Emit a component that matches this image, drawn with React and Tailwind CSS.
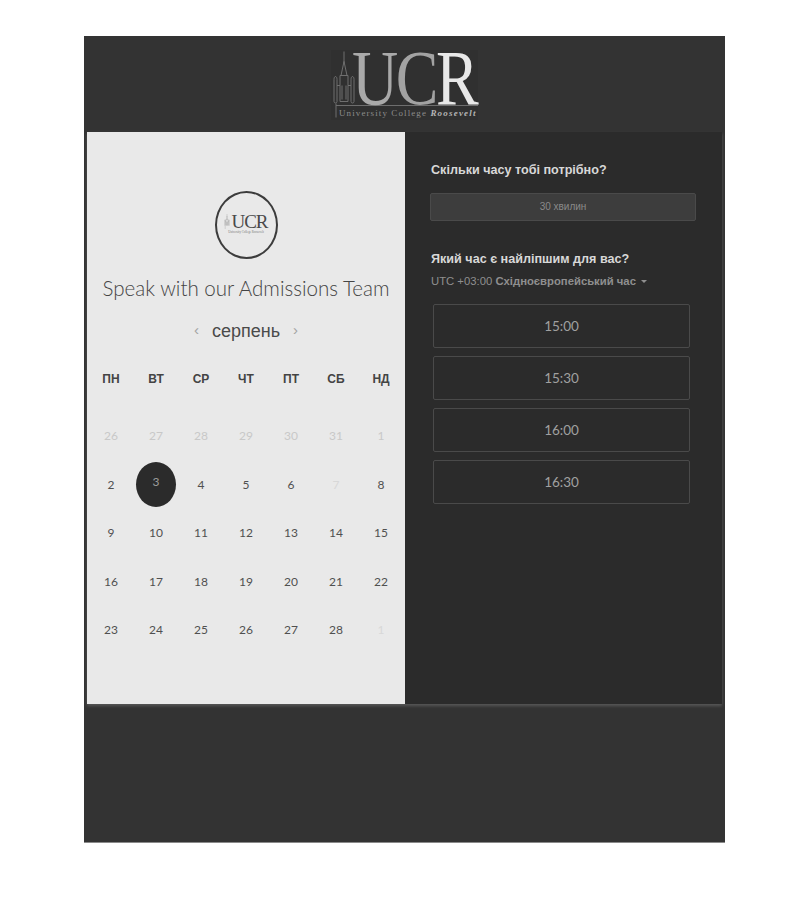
const SANS = "font-['Liberation_Sans',Arial,sans-serif]";
const LATO = "font-['Lato',sans-serif]";
const SERIF = "font-['Liberation_Serif',serif]";

const weeks = [
  [["26", "m"], ["27", "m"], ["28", "m"], ["29", "m"], ["30", "m"], ["31", "m"], ["1", "m"]],
  [["2"], ["3", "s"], ["4"], ["5"], ["6"], ["7", "f"], ["8"]],
  [["9"], ["10"], ["11"], ["12"], ["13"], ["14"], ["15"]],
  [["16"], ["17"], ["18"], ["19"], ["20"], ["21"], ["22"]],
  [["23"], ["24"], ["25"], ["26"], ["27"], ["28"], ["1", "f"]],
];
const days = ["ПН", "ВТ", "СР", "ЧТ", "ПТ", "СБ", "НД"];
const slots = ["15:00", "15:30", "16:00", "16:30"];

function Tower({ className }) {
  return (
    <svg viewBox="0 0 24 66" className={className} fill="none" stroke="#6f6f6f" strokeWidth="1">
      <path d="M12 0V12M9 24L12 10L15 24M8 24H16V34M8 24V34" />
      <path d="M2 28C2 24 5 24 5 28V50C5 52 2 52 2 50ZM19 28C19 24 22 24 22 28V50C22 52 19 52 19 50Z" />
      <path d="M5 34H8V50M19 34H16V50M10 34V48M14 34V48M8 50H16" />
      <path d="M4 52V66" />
    </svg>
  );
}

function Day({ label, kind }) {
  const color = kind === "m" ? "text-[#c8c8c8]" : kind === "f" ? "text-[#d8d8d8]" : "text-[#505050]";
  return (
    <div className="flex h-[48.5px] items-center justify-center">
      {kind === "s" ? (
        <div className="-mt-[1px] flex h-[45px] w-[40px] items-center justify-center rounded-[50%] bg-[#2b2b2b] pb-[4px] text-[#9c9c9c]">{label}</div>
      ) : (
        <span className={color}>{label}</span>
      )}
    </div>
  );
}

export default function App() {
  return (
    <div className="min-h-[900px] bg-white pl-[84px] pt-[36px]">
      <div className="flex h-[807px] w-[641px] flex-col border-b border-[#8a8a8a] bg-[#333333]">
        <header className="flex h-[96px] shrink-0 justify-center pt-[14px]">
          <div className="flex h-[70px] w-[147px] flex-col bg-[#303030] pl-[1px]">
            <div className="relative flex h-[55px] shrink-0">
              <Tower className="absolute left-0 top-0 h-[69px] w-[24px]" />
              <div className={`${SERIF} ml-[20px] flex h-[55px] origin-left scale-x-[0.82] text-[78px] leading-[55px] tracking-[-3px]`}>
                <span className="text-[#a9a9a9]">U</span>
                <span className="text-[#a2a2a2]">C</span>
                <span className="text-[#e8e8e8]">R</span>
              </div>
            </div>
            <div className="ml-[4px] h-px bg-[#6e6e6e]" />
            <div className={`${SERIF} ml-[7px] mt-[1px] flex items-baseline whitespace-nowrap text-[9px] leading-[12px] tracking-[1.1px] text-[#8c8c8c]`}>
              University College&nbsp;
              <span className="font-bold italic tracking-[1.2px] text-[#b5b5b5]">Roosevelt</span>
            </div>
          </div>
        </header>

        <main className="mx-[3px] flex h-[572px] shrink-0 shadow-[0_2px_3px_rgba(255,255,255,0.18)]">
          <section className="flex w-[318px] flex-col items-center bg-[#e9e9e9] px-[1.5px]">
            <div className="mt-[59px] flex h-[68px] w-[63px] flex-col items-center justify-center rounded-[50%] border-2 border-[#3c3c3c] pb-[3px]">
              <div className={`${SERIF} flex items-center text-[19px] leading-[17px] tracking-[-1px] text-[#4a4a4a]`}>
                <Tower className="mr-[1px] h-[15px] w-[6px]" />
                UCR
              </div>
              <div className={`${SERIF} whitespace-nowrap text-[3px] leading-[4px] text-[#777777]`}>University College Roosevelt</div>
            </div>
            <h1 className={`${LATO} mt-[14px] whitespace-nowrap text-[20.55px] font-light leading-[30px] text-[#454545]`}>Speak with our Admissions Team</h1>
            <div className={`${SANS} mt-[14px] flex h-[28px] items-center gap-[13px] text-[#4a4a4a]`}>
              <span className="pb-[2px] text-[15px] text-[#a3a3a3]">‹</span>
              <span className="text-[18px]">серпень</span>
              <span className="pb-[2px] text-[15px] text-[#a3a3a3]">›</span>
            </div>
            <div className={`${SANS} mt-[22px] grid w-full grid-cols-[repeat(7,45px)] text-center text-[12px] font-bold leading-[24px] text-[#444444]`}>
              {days.map((d) => (
                <div key={d}>{d}</div>
              ))}
            </div>
            <div className={`${LATO} mt-[21px] grid w-full grid-cols-[repeat(7,45px)] text-center text-[12px]`}>
              {weeks.flat().map(([label, kind], i) => (
                <Day key={i} label={label} kind={kind} />
              ))}
            </div>
          </section>

          <section className={`${SANS} flex-1 bg-[#2b2b2b] pl-[25px] pr-[26px] pt-[29px]`}>
            <h2 className="pl-[1px] text-[12.6px] font-bold leading-[18px] text-[#d8d8d8]">Скільки часу тобі потрібно?</h2>
            <div className="mt-[14px] flex h-[28px] items-center justify-center rounded-[2px] border border-[#4a4a4a] bg-[#3d3d3d] pb-[2px] text-[10px] text-[#8a8a8a]">30 хвилин</div>
            <h2 className="mt-[29px] pl-[1px] text-[12.6px] font-bold leading-[18px] text-[#d8d8d8]">Який час є найліпшим для вас?</h2>
            <div className="mt-[4px] flex h-[18px] items-center pl-[1px] text-[11.3px] text-[#8f8f8f]">
              UTC +03:00&nbsp;<span className="font-bold">Східноєвропейський час</span>
              <span className="ml-[5px] h-0 w-0 border-x-[3px] border-t-[3px] border-x-transparent border-t-[#8f8f8f]" />
            </div>
            <div className="ml-[3px] mr-[6px] mt-[14px] flex flex-col gap-[8px]">
              {slots.map((s) => (
                <div key={s} className={`${LATO} flex h-[44px] items-center justify-center rounded-[2px] border border-[#4a4a4a] pt-[1px] text-[13.5px] text-[#a0a0a0]`}>{s}</div>
              ))}
            </div>
          </section>
        </main>
      </div>
    </div>
  );
}
